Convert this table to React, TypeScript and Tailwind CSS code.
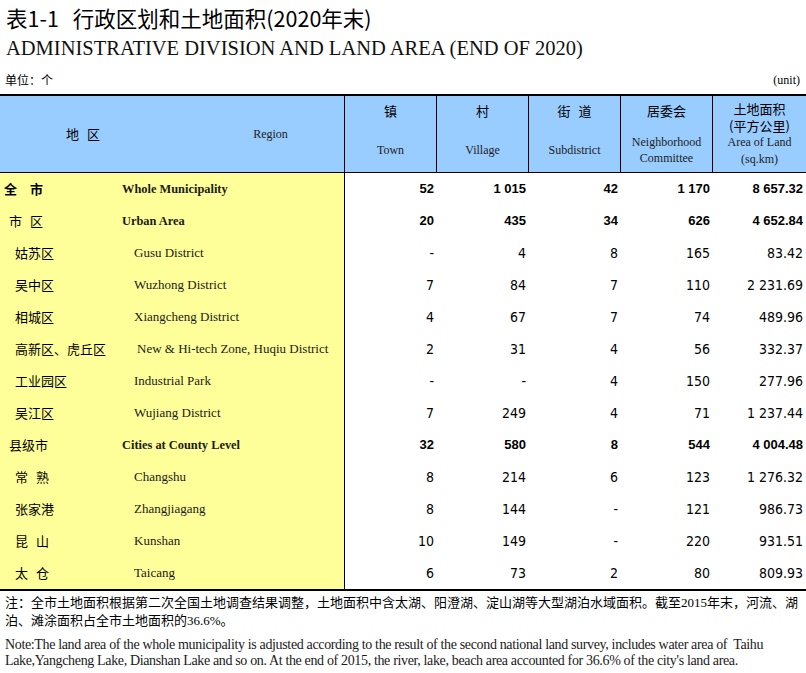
import React from "react";

type Row = {
  zh: React.ReactNode;
  en: string;
  level: 0 | 1 | 2;
  bold?: boolean;
  zhBold?: boolean;
  enIndent?: string;
  vals: string[];
};

const sp = (a: string, b: string) => (
  <>
    {a}
    <span className="ml-[8px]">{b}</span>
  </>
);

const rows: Row[] = [
  { zh: <>全<span className="ml-[13px]">市</span></>, en: "Whole Municipality", level: 0, bold: true, zhBold: true, vals: ["52", "1 015", "42", "1 170", "8 657.32"] },
  { zh: sp("市", "区"), en: "Urban Area", level: 1, bold: true, vals: ["20", "435", "34", "626", "4 652.84"] },
  { zh: "姑苏区", en: "Gusu District", level: 2, vals: ["-", "4", "8", "165", "83.42"] },
  { zh: "吴中区", en: "Wuzhong District", level: 2, vals: ["7", "84", "7", "110", "2 231.69"] },
  { zh: "相城区", en: "Xiangcheng District", level: 2, vals: ["4", "67", "7", "74", "489.96"] },
  { zh: "高新区、虎丘区", en: "New & Hi-tech Zone, Huqiu District", level: 2, enIndent: "pl-[15px]", vals: ["2", "31", "4", "56", "332.37"] },
  { zh: "工业园区", en: "Industrial Park", level: 2, vals: ["-", "-", "4", "150", "277.96"] },
  { zh: "吴江区", en: "Wujiang District", level: 2, vals: ["7", "249", "4", "71", "1 237.44"] },
  { zh: "县级市", en: "Cities at County Level", level: 1, bold: true, vals: ["32", "580", "8", "544", "4 004.48"] },
  { zh: sp("常", "熟"), en: "Changshu", level: 2, vals: ["8", "214", "6", "123", "1 276.32"] },
  { zh: "张家港", en: "Zhangjiagang", level: 2, vals: ["8", "144", "-", "121", "986.73"] },
  { zh: sp("昆", "山"), en: "Kunshan", level: 2, vals: ["10", "149", "-", "220", "931.51"] },
  { zh: sp("太", "仓"), en: "Taicang", level: 2, vals: ["6", "73", "2", "80", "809.93"] },
];

const CJK = "font-['Noto_Sans_CJK_SC',sans-serif]";
const SERIF = "font-['Liberation_Serif','Noto_Sans_CJK_SC',serif]";
const NARROW = "font-['Liberation_Sans_Narrow','Arial_Narrow','DejaVu_Sans_Condensed',sans-serif]";
const SANS = "font-['Liberation_Sans',Arial,sans-serif]";

function HeaderSimple({ zh, en }: { zh: React.ReactNode; en: string }) {
  return (
    <div className="flex flex-col items-center border-r border-black pt-[6px]">
      <div className={`${CJK} text-[13px] leading-[18px] text-black`}>{zh}</div>
      <div className={`${SERIF} mt-[22px] text-[12px] leading-[16px] text-[#222]`}>{en}</div>
    </div>
  );
}

export default function App() {
  return (
    <div className="w-[806px] bg-white text-black">
      <div className={`${CJK} flex h-[36px] items-center pl-[6px] text-[21.5px] leading-[28px]`}>
        表1-1<span className="ml-[14px]">行政区划和土地面积(2020年末)</span>
      </div>
      <div className={`${SERIF} flex h-[24px] items-center pl-[6px] text-[20.5px] leading-[24px] text-[#111]`}>
        ADMINISTRATIVE DIVISION AND LAND AREA (END OF 2020)
      </div>
      <div className="flex h-[34px] items-end justify-between pb-[6px] pl-[5px] pr-[6px]">
        <span className={`${CJK} text-[12px] leading-[16px]`}>单位：个</span>
        <span className={`${SERIF} text-[12px] leading-[16px]`}>(unit)</span>
      </div>

      <div className="border-t-2 border-b-2 border-black">
        {/* header */}
        <div className="grid h-[77px] grid-cols-[345px_92px_92px_92px_92px_1fr] border-b border-black bg-[#99ccff]">
          <div className="flex items-center border-r border-black">
            <div className={`${CJK} flex w-[166px] justify-center text-[13px]`}>
              地<span className="ml-[8px]">区</span>
            </div>
            <div className={`${SERIF} flex flex-1 justify-center pl-[31px] text-[12px] text-[#222]`}>Region</div>
          </div>
          <HeaderSimple zh="镇" en="Town" />
          <HeaderSimple zh="村" en="Village" />
          <HeaderSimple zh={<>街<span className="ml-[8px]">道</span></>} en="Subdistrict" />
          <div className="flex flex-col items-center border-r border-black pt-[6px]">
            <div className={`${CJK} text-[13px] leading-[18px]`}>居委会</div>
            <div className={`${SERIF} mt-[14px] text-center text-[12px] leading-[16px] text-[#222]`}>
              Neighborhood
              <br />
              Committee
            </div>
          </div>
          <div className="flex flex-col items-center pt-[4px]">
            <div className={`${CJK} text-[13px] leading-[17px]`}>土地面积</div>
            <div className={`${CJK} text-[13px] leading-[17px]`}>(平方公里)</div>
            <div className={`${SERIF} text-[12px] leading-[17px] text-[#222]`}>Area of Land</div>
            <div className={`${SERIF} text-[12px] leading-[17px] text-[#222]`}>(sq.km)</div>
          </div>
        </div>

        {/* body */}
        {rows.map((r, i) => (
          <div key={i} className="grid h-[32px] grid-cols-[345px_92px_92px_92px_92px_1fr]">
            <div className="flex items-center border-r border-black bg-[#ffff99]">
              <div
                className={`${CJK} w-[122px] text-[13px] leading-[18px] ${r.zhBold ? "font-bold" : ""} ${
                  r.level === 0 ? "pl-[4px]" : r.level === 1 ? "pl-[9px]" : "pl-[15px]"
                }`}
              >
                {r.zh}
              </div>
              <div
                className={`${SERIF} leading-[18px] text-[#1a1a1a] ${
                  r.bold ? "text-[12.4px] font-bold" : `text-[13px] ${r.enIndent ?? "pl-[12px]"}`
                }`}
              >
                {r.en}
              </div>
            </div>
            {r.vals.map((v, j) => (
              <div
                key={j}
                className={`flex items-center justify-end pr-[3px] ${
                  r.bold ? `${SANS} text-[13px] font-bold` : `${NARROW} text-[14px]`
                }`}
              >
                {v}
              </div>
            ))}
          </div>
        ))}
      </div>

      <div className={`${SERIF} mt-[3px] pl-[5px] text-[13px] leading-[18px]`}>
        <div className="whitespace-nowrap">
          注：全市土地面积根据第二次全国土地调查结果调整，土地面积中含太湖、阳澄湖、淀山湖等大型湖泊水域面积。截至2015年末，河流、湖
        </div>
        <div className="whitespace-nowrap">泊、滩涂面积占全市土地面积的36.6%。</div>
      </div>
      <div className={`${SERIF} mt-[7px] pl-[5px] text-[14px] leading-[16px] tracking-[-0.35px] text-[#1a1a1a]`}>
        <div className="whitespace-nowrap">
          Note:The land area of the whole municipality is adjusted according to the result of the second national land survey, includes water area of&nbsp; Taihu
        </div>
        <div className="whitespace-nowrap">
          Lake,Yangcheng Lake, Dianshan Lake and so on. At the end of 2015, the river, lake, beach area accounted for 36.6% of the city's land area.
        </div>
      </div>
    </div>
  );
}
